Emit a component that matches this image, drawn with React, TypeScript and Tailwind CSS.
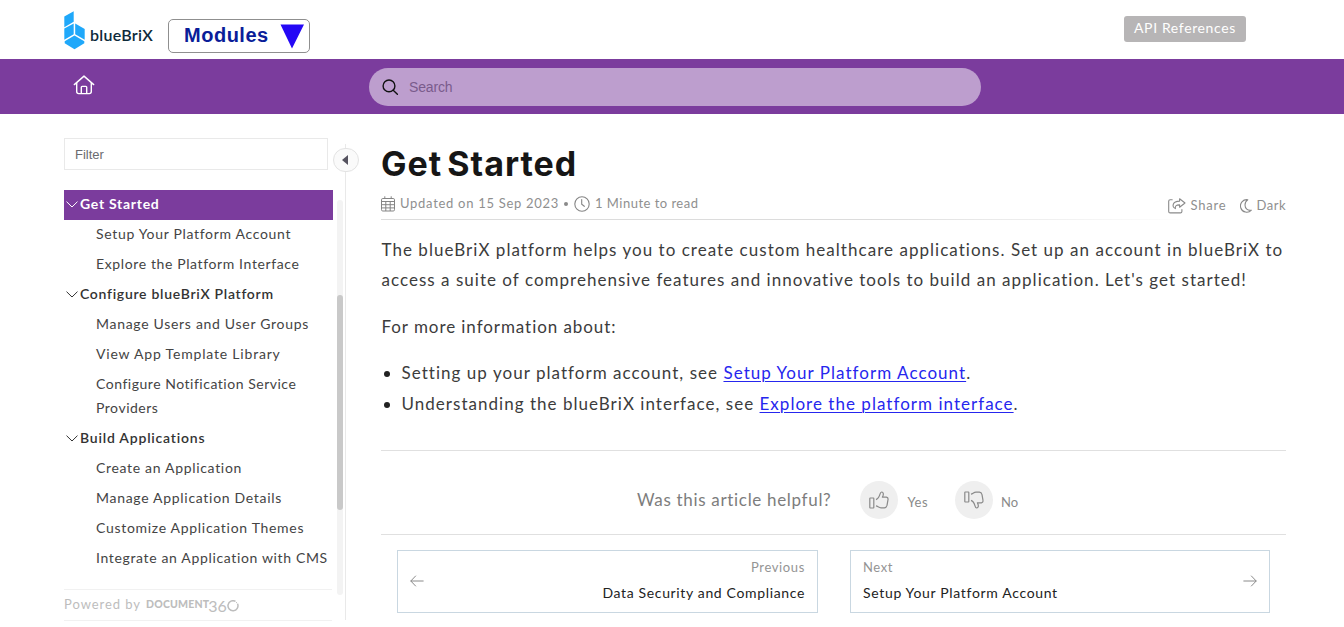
import type { ReactNode } from 'react';

type Leaf = { label: string; track: string };
type Section = { title: string; track: string; active?: boolean; items: Leaf[] };

const sections: Section[] = [
  {
    title: 'Get Started',
    track: 'tracking-[0.72px]',
    active: true,
    items: [
      { label: 'Setup Your Platform Account', track: 'tracking-[0.68px]' },
      { label: 'Explore the Platform Interface', track: 'tracking-[0.62px]' },
    ],
  },
  {
    title: 'Configure blueBriX Platform',
    track: 'tracking-[0.71px]',
    items: [
      { label: 'Manage Users and User Groups', track: 'tracking-[0.7px]' },
      { label: 'View App Template Library', track: 'tracking-[0.81px]' },
      { label: 'Configure Notification Service Providers', track: 'tracking-[0.52px]' },
    ],
  },
  {
    title: 'Build Applications',
    track: 'tracking-[0.79px]',
    items: [
      { label: 'Create an Application', track: 'tracking-[0.68px]' },
      { label: 'Manage Application Details', track: 'tracking-[0.7px]' },
      { label: 'Customize Application Themes', track: 'tracking-[0.7px]' },
      { label: 'Integrate an Application with CMS', track: 'tracking-[0.65px]' },
    ],
  },
];

function Logo() {
  return (
    <svg width="21" height="39" viewBox="0 0 21 39" fill="#1fa8fa">
      <path d="M0.3 5.6 9.7 0.3V10.8L0.3 16.2Z" />
      <path d="M0.3 17.6 9.7 12.4V23.2L0.3 28.8Z" />
      <path d="M11.2 12.4 20.7 18V28.8L11.2 23.2Z" />
      <path d="M10.5 24.5 20.3 30.3V32.2L10.5 38.2 0.7 32.2V30.3Z" />
    </svg>
  );
}

function Header() {
  return (
    <header className="flex h-[59px] items-start pl-16 pr-[98px]">
      <div className="flex h-[39px] pt-[11px]">
        <Logo />
        <span className="ml-[5px] mt-[13px] text-base font-semibold leading-[22px] tracking-[0.27px] text-[#0d2a3a]">
          blueBriX
        </span>
      </div>
      <button className="ml-[15px] mt-[19px] flex h-[34px] w-[142px] items-center rounded-[5px] border border-[#8f8f8f] pl-[15px] font-['Liberation_Sans',sans-serif] text-xl font-bold tracking-[0.5px] text-[#0a1d99]">
        <span className="-mt-0.5">Modules</span>
        <svg className="ml-[11px]" width="25" height="25" viewBox="0 0 25 25">
          <path d="M0.5 0.5H24L12 24.5Z" fill="#2408f5" />
        </svg>
      </button>
      <button className="ml-auto mt-4 h-[26px] w-[122px] rounded-[3px] bg-[#b7b5b6] pb-0.5 text-sm/[24px] tracking-[0.63px] text-white">
        API References
      </button>
    </header>
  );
}

function TopBar() {
  return (
    <div className="flex h-[55px] items-center bg-[#7b3c9d] pl-[73px]">
      <svg className="-mt-[3px]" width="22" height="20" viewBox="0 0 22 20" fill="none" stroke="#fff" strokeWidth="1.4" strokeLinecap="round" strokeLinejoin="round">
        <path d="M1.3 9.6 11 1.1 20.7 9.6" />
        <path d="M3.7 8V16.6Q3.7 18.6 5.7 18.6H16.3Q18.3 18.6 18.3 16.6V8" />
        <path d="M8.3 18.4V12.2Q8.3 11.4 9.1 11.4H12.9Q13.7 11.4 13.7 12.2V18.4" />
      </svg>
      <div className="ml-[274px] flex h-[38px] w-[612px] items-center rounded-full bg-[#bd9ece] pl-[13px]">
        <svg className="mt-px" width="17" height="17" viewBox="0 0 17 17" fill="none" stroke="#111" strokeWidth="1.4" strokeLinecap="round">
          <circle cx="7" cy="6.9" r="5.9" />
          <path d="M11.2 11.2 15.4 15.2" />
        </svg>
        <span className="ml-2.5 font-['Liberation_Sans',sans-serif] text-sm tracking-[-0.15px] text-[#7a5b8c]">Search</span>
      </div>
    </div>
  );
}

function Chevron() {
  return (
    <svg className="shrink-0" width="12" height="7" viewBox="0 0 12 7" fill="none" stroke="currentColor" strokeWidth="1" strokeLinecap="round" strokeLinejoin="round">
      <path d="M0.8 0.9 6 6 11.2 0.9" />
    </svg>
  );
}

function Sidebar() {
  return (
    <aside className="relative h-[506px] w-[282px] shrink-0 pt-6">
      <div className="flex h-8 w-[264px] items-center border border-[#e9e9e9] pl-2.5 pt-px font-['Liberation_Sans',sans-serif] text-[13px] text-[#6b6b70]">
        Filter
      </div>
      <div className="mt-5 flex h-[399px]">
        <nav className="w-[269px] text-sm leading-6 text-[#444]">
          {sections.map((s) => (
            <div key={s.title}>
              <div
                className={
                  s.active
                    ? 'flex h-[30px] items-center gap-0.5 bg-[#7b3c9d] pb-0.5 pl-0.5 text-white'
                    : 'flex h-[30px] items-center gap-0.5 pb-0.5 pl-0.5 text-[#333]'
                }
              >
                <Chevron />
                <span className={(s.active ? 'font-bold ' : 'font-semibold ') + s.track}>{s.title}</span>
              </div>
              {s.items.map((it) => (
                <div key={it.label} className={'-mr-1 pb-1 pl-8 pt-0.5 ' + it.track}>
                  {it.label}
                </div>
              ))}
            </div>
          ))}
        </nav>
        <div className="ml-1 mt-2.5 h-[395px] w-1.5 shrink-0 rounded-full bg-[#f3f3f3] pt-[95px]">
          <div className="h-[215px] rounded-full bg-[#c9c9c9]" />
        </div>
      </div>
      <div className="flex h-8 w-[268px] items-center border-y border-[#f1f1f1] text-[#bdbdbd]">
        <span className="text-[13px] tracking-[0.95px]">Powered by</span>
        <span className="ml-[5px] flex items-center">
          <span className="text-[10.5px] font-black tracking-[0.2px]">DOCUMENT</span>
          <span className="-ml-px mt-0.5 flex items-center text-base leading-4 tracking-[-0.2px]">
            36
            <svg width="12" height="12" viewBox="0 0 12 12" fill="none" stroke="currentColor" strokeWidth="1.5">
              <path d="M8.5 1.4A5 5 0 1 0 10.6 3.8" />
              <path d="M9 2.2 10.2 3.2" strokeWidth="1" />
            </svg>
          </span>
        </span>
      </div>
      <div className="absolute right-0 top-[30px] h-[476px] w-px bg-[#e9e9e9]" />
      <button className="absolute -right-[13px] top-[34px] flex h-6 w-[26px] items-center justify-center rounded-full border border-[#e3e3e3] bg-[#fafafa] pr-[3px]">
        <svg width="6" height="10" viewBox="0 0 6 10" fill="#55535f">
          <path d="M6 0V10L0 5Z" />
        </svg>
      </button>
    </aside>
  );
}

function CalendarIcon() {
  return (
    <svg width="14" height="16" viewBox="0 0 14 16" fill="none" stroke="#858585" strokeWidth="1">
      <rect x="0.5" y="2.5" width="13" height="12.5" rx="1.3" />
      <path d="M0.5 5.5H13.5M0.5 8.7H13.5M0.5 11.9H13.5M4.8 5.5V15M9.2 5.5V15M3.8 0.3V2.5M10.2 0.3V2.5" />
    </svg>
  );
}

function ClockIcon() {
  return (
    <svg width="16" height="16" viewBox="0 0 16 16" fill="none" stroke="#858585" strokeWidth="1.1" strokeLinecap="round">
      <circle cx="8" cy="8" r="7.2" />
      <path d="M7.7 3.6V8.2L10.3 10.3" />
    </svg>
  );
}

function ShareIcon() {
  return (
    <svg width="18" height="16" viewBox="0 0 18 16" fill="none" stroke="#8a8a8a" strokeWidth="1.1" strokeLinejoin="round" strokeLinecap="round">
      <path d="M4.2 1.7H2.2Q0.7 1.7 0.7 3.2V13.4Q0.7 14.9 2.2 14.9H12.4Q13.9 14.9 13.9 13.4V11.6" />
      <path d="M11.6 0.8 17 5 11.6 9.2V6.9C8.6 6.8 6.8 7.6 7.4 10.6 3.8 8.8 4 3.2 11.6 3.1Z" />
    </svg>
  );
}

function MoonIcon() {
  return (
    <svg width="12" height="14" viewBox="0 0 12 14" fill="none" stroke="#8a8a8a" strokeWidth="1.1" strokeLinejoin="round">
      <path d="M7.8 0.7A6.3 6.3 0 1 0 11.4 11.2C7.6 11.9 5 9.4 5 6 5 3.6 6 1.8 7.8 0.7Z" />
    </svg>
  );
}

function ThumbIcon({ down }: { down?: boolean }) {
  return (
    <svg className={down ? '-scale-y-100' : ''} width="20" height="18" viewBox="0 0 20 18" fill="none" stroke="#8a8a8a" strokeWidth="1.2" strokeLinejoin="round">
      <rect x="0.8" y="7" width="4" height="10" rx="0.4" />
      <path d="M7 8.6C9.6 7.6 10.4 5.4 11 3.2 11.4 1.6 11.8 0.9 12.8 1 14.4 1.2 14.6 3 14 4.8L13.4 6.2H17.4Q19.4 6.6 19 8.6L18 14.4Q17.4 16.6 15.4 16.8H12C9.8 16.8 9 15.4 7 14.9" />
    </svg>
  );
}

function Arrow({ right }: { right?: boolean }) {
  return (
    <svg className={right ? '-mt-0.5 -scale-x-100' : '-mt-0.5'} width="14" height="12" viewBox="0 0 14 12" fill="none" stroke="#8a8a8a" strokeWidth="1" strokeLinecap="round" strokeLinejoin="round">
      <path d="M13.2 6H0.9M5.6 1 0.8 6 5.6 11" />
    </svg>
  );
}

function Link({ children }: { children: ReactNode }) {
  return <a className="text-[#2626ee] underline decoration-1 underline-offset-2">{children}</a>;
}

function Article() {
  return (
    <main className="ml-[35px] w-[905px] pt-[30px]">
      <h1 className="font-['Inter',sans-serif] text-[34px] font-bold leading-10 tracking-[1px] text-[#161616] [word-spacing:-4px]">Get Started</h1>
      <div className="flex h-[35px] text-[13px] text-[#8f8f8f]">
        <div className="flex h-[39px] items-center">
          <CalendarIcon />
          <span className="ml-[5px] tracking-[0.71px]">Updated on 15 Sep 2023</span>
          <span className="ml-[5px] size-1 rounded-full bg-[#8a8a8a]" />
          <span className="ml-1.5"><ClockIcon /></span>
          <span className="ml-[5px] tracking-[0.48px]">1 Minute to read</span>
        </div>
        <div className="ml-auto flex h-[43px] items-center">
          <ShareIcon />
          <span className="ml-1 mt-px tracking-[0.8px]">Share</span>
          <span className="ml-[14px]"><MoonIcon /></span>
          <span className="ml-1 mt-px tracking-[0.5px]">Dark</span>
        </div>
      </div>
      <div className="h-px w-[810px] bg-linear-to-r from-[#dcdcdc] from-60% to-transparent" />
      <div className="whitespace-nowrap pl-[0.5px] pt-[15px] text-[17px] leading-[30px] text-[#3c3c3c]">
        <p>
          <span className="tracking-[1.033px]">The blueBriX platform helps you to create custom healthcare applications. Set up an account in blueBriX to</span>
          <br />
          <span className="tracking-[1.023px]">access a suite of comprehensive features and innovative tools to build an application. Let's get started!</span>
        </p>
        <p className="mt-[17px] tracking-[0.93px]">For more information about:</p>
        <ul className="mt-4 flex flex-col gap-px">
          <li className="flex items-center tracking-[1.04px]">
            <span className="ml-0.5 mr-3 mt-px size-1.5 rounded-full bg-[#222]" />
            <span>Setting up your platform account, see <Link>Setup Your Platform Account</Link>.</span>
          </li>
          <li className="flex items-center tracking-[1.025px]">
            <span className="ml-0.5 mr-3 mt-px size-1.5 rounded-full bg-[#222]" />
            <span>Understanding the blueBriX interface, see <Link>Explore the platform interface</Link>.</span>
          </li>
        </ul>
      </div>
      <div className="mt-[31px] flex h-[85px] items-center border-y border-[#e0e0e0] pl-64 pt-3.5 text-[13px] text-[#8a8a8a]">
        <span className="text-[17px] tracking-[0.68px] text-[#7d7d7d]">Was this article helpful?</span>
        <span className="ml-[29px] flex size-[38px] items-center justify-center rounded-full bg-[#efefef]"><ThumbIcon /></span>
        <span className="ml-[9px] mt-1.5 tracking-[0.5px]">Yes</span>
        <span className="ml-[27px] flex size-[38px] items-center justify-center rounded-full bg-[#efefef]"><ThumbIcon down /></span>
        <span className="ml-2 mt-1.5">No</span>
      </div>
      <div className="mt-[15px] flex gap-8 px-4">
        <a className="flex h-[63px] w-[421px] items-center justify-between border border-[#c9d7e1] px-3">
          <Arrow />
          <span className="-mt-1 flex flex-col text-right">
            <span className="text-[13px]/[26px] tracking-[0.63px] text-[#949494]">Previous</span>
            <span className="text-sm/[26px] tracking-[0.65px] text-[#222]">Data Security and Compliance</span>
          </span>
        </a>
        <a className="flex h-[63px] w-[420px] items-center justify-between border border-[#c9d7e1] px-3">
          <span className="-mt-1 flex flex-col">
            <span className="text-[13px]/[26px] tracking-[0.6px] text-[#949494]">Next</span>
            <span className="text-sm/[26px] tracking-[0.67px] text-[#222]">Setup Your Platform Account</span>
          </span>
          <Arrow right />
        </a>
      </div>
    </main>
  );
}

export default function App() {
  return (
    <div className="h-[627px] w-[1344px] overflow-hidden bg-white font-['Lato',sans-serif]">
      <Header />
      <TopBar />
      <div className="flex pl-16">
        <Sidebar />
        <Article />
      </div>
    </div>
  );
}
